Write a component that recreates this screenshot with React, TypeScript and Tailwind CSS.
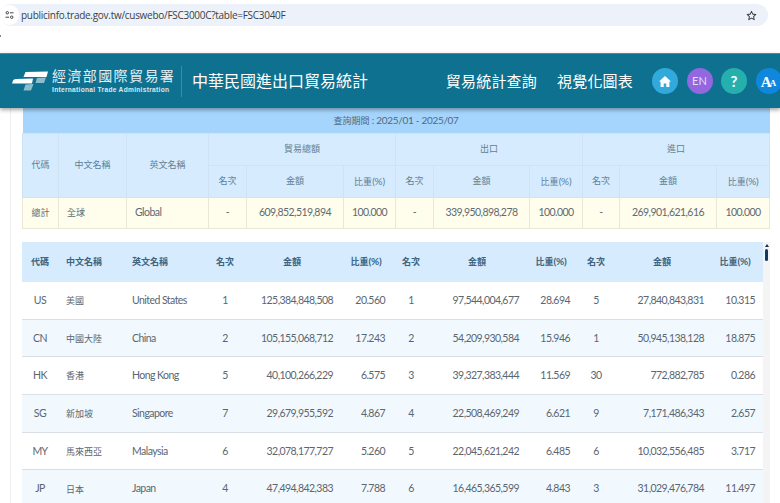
const cjk = "font-['Lato','Noto_Sans_CJK_TC',sans-serif]";

const rows = [
  ["US", "美國", "United States", "1", "125,384,848,508", "20.560", "1", "97,544,004,677", "28.694", "5", "27,840,843,831", "10.315"],
  ["CN", "中國大陸", "China", "2", "105,155,068,712", "17.243", "2", "54,209,930,584", "15.946", "1", "50,945,138,128", "18.875"],
  ["HK", "香港", "Hong Kong", "5", "40,100,266,229", "6.575", "3", "39,327,383,444", "11.569", "30", "772,882,785", "0.286"],
  ["SG", "新加坡", "Singapore", "7", "29,679,955,592", "4.867", "4", "22,508,469,249", "6.621", "9", "7,171,486,343", "2.657"],
  ["MY", "馬來西亞", "Malaysia", "6", "32,078,177,727", "5.260", "5", "22,045,621,242", "6.485", "6", "10,032,556,485", "3.717"],
  ["JP", "日本", "Japan", "4", "47,494,842,383", "7.788", "6", "16,465,365,599", "4.843", "3", "31,029,476,784", "11.497"],
];

const topCols = [36, 68, 82, 38, 97, 52, 38, 96, 53, 37, 97, 53];
const listCols = [36, 66, 79, 44, 90, 58, 32, 100, 48, 42, 90, 56];

const cellAlign = [
  "pt-px text-center",
  "pl-2 pt-px text-left text-[9px] tracking-normal",
  "pl-2 pt-px text-left",
  "pt-px text-center",
  "pr-1 pt-px text-right",
  "pr-[10px] pt-px text-right",
  "pt-px text-center",
  "pr-2 pt-px text-right",
  "pr-[5px] pt-px text-right",
  "pt-px text-center",
  "pr-[3px] pt-px text-right",
  "pr-2 pt-px text-right",
];

function Logo() {
  return (
    <svg width="36" height="20" viewBox="0 0 36 20" className="shrink-0">
      <path d="M13.5 1 L36 0.5 L34.5 6 L11.5 6 Z" fill="#ffffff" />
      <path d="M1 9.5 Q1.5 8 4 8 L21 7.5 L20 12.5 L0 12.5 Z" fill="#ffffff" />
      <path d="M25 7 L34 6.5 L32 12 L23.5 12 Z" fill="#8dbccc" />
      <path d="M13.5 13.5 L21.5 13 L19 19.5 L11.5 19.5 Z" fill="#8dbccc" />
    </svg>
  );
}

function Label({ text }: { text: string }) {
  if (text.endsWith("(%)")) {
    return (
      <>
        {text.slice(0, -3)}
        <span className="text-[10px] tracking-[-0.2px]">(%)</span>
      </>
    );
  }
  return <>{text}</>;
}

function HeadCell({ children, rowSpan, colSpan }: { children: string; rowSpan?: number; colSpan?: number }) {
  return (
    <th rowSpan={rowSpan} colSpan={colSpan} className="border border-[#cfe3f5] text-center text-[9px] font-normal text-[#5f7f96]">
      <Label text={children} />
    </th>
  );
}

function TopTable() {
  const bordered = "border border-[#ebe7d6] pt-px";
  return (
    <table className="w-[747px] table-fixed border-collapse">
      <colgroup>
        {topCols.map((w, i) => (
          <col key={i} style={{ width: w }} />
        ))}
      </colgroup>
      <thead>
        <tr className="h-[25px] bg-[#a5d5fd]">
          <th colSpan={12} className="text-center text-[9px] font-normal text-[#51697c]">
            查詢期間 <span className="text-[10px] tracking-[-0.3px]">: 2025/01 - 2025/07</span>
          </th>
        </tr>
        <tr className="h-[32px] bg-[#d6ebfd]">
          <HeadCell rowSpan={2}>代碼</HeadCell>
          <HeadCell rowSpan={2}>中文名稱</HeadCell>
          <HeadCell rowSpan={2}>英文名稱</HeadCell>
          <HeadCell colSpan={3}>貿易總額</HeadCell>
          <HeadCell colSpan={3}>出口</HeadCell>
          <HeadCell colSpan={3}>進口</HeadCell>
        </tr>
        <tr className="h-[32px] bg-[#d6ebfd]">
          {["名次", "金額", "比重(%)", "名次", "金額", "比重(%)", "名次", "金額", "比重(%)"].map((t, i) => (
            <HeadCell key={i}>{t}</HeadCell>
          ))}
        </tr>
      </thead>
      <tbody>
        <tr className="h-[31px] bg-[#fffdeb] text-[10.5px] tracking-[-0.55px] text-[#5e6b73]">
          <td className={`${bordered} text-center text-[9px] tracking-normal`}>總計</td>
          <td className={`${bordered} pl-2 text-[9px] tracking-normal`}>全球</td>
          <td className={`${bordered} pl-2`}>Global</td>
          {["-", "609,852,519,894", "100.000", "-", "339,950,898,278", "100.000", "-", "269,901,621,616", "100.000"].map((t, i) => (
            <td key={i} className={`${bordered} text-center`}>
              {t}
            </td>
          ))}
        </tr>
      </tbody>
    </table>
  );
}

function ListTable() {
  const heads = ["代碼", "中文名稱", "英文名稱", "名次", "金額", "比重(%)", "名次", "金額", "比重(%)", "名次", "金額", "比重(%)"];
  return (
    <table className="w-[741px] table-fixed border-collapse">
      <colgroup>
        {listCols.map((w, i) => (
          <col key={i} style={{ width: w }} />
        ))}
      </colgroup>
      <thead>
        <tr className="h-[40px] bg-[#d6ebfd]">
          {heads.map((h, i) => (
            <th key={i} className={`text-[9px] font-bold text-[#3d6480] ${i === 1 || i === 2 ? "pl-2 text-left" : "text-center"}`}>
              <Label text={h} />
            </th>
          ))}
        </tr>
      </thead>
      <tbody>
        {rows.map((row, r) => (
          <tr key={row[0]} className={`h-[37.7px] border-b border-[#d9dfe4] text-[10.5px] tracking-[-0.55px] text-[#5a6670] ${r % 2 === 1 ? "bg-[#f2f9fe]" : "bg-white"}`}>
            {row.map((cell, i) => (
              <td key={i} className={cellAlign[i]}>
                {cell}
              </td>
            ))}
          </tr>
        ))}
      </tbody>
    </table>
  );
}

export default function App() {
  return (
    <div className={`h-[503px] w-[780px] overflow-hidden bg-white ${cjk}`}>
      <div className="h-[53px] pt-[4px]">
        <div className="flex h-[22px] w-[768px] items-center rounded-full bg-[#edf2fa] pr-[11px]">
          <div className="flex h-[20px] w-[19px] items-center justify-center rounded-full bg-white">
            <svg width="9" height="8" viewBox="0 0 10 9" fill="none" stroke="#3c4043" strokeWidth="1.1">
              <circle cx="2.5" cy="2" r="1.4" />
              <path d="M5.5 2 H9.5" />
              <circle cx="7.5" cy="7" r="1.4" />
              <path d="M0.5 7 H4.5" />
            </svg>
          </div>
          <span className="ml-[2px] font-['Open_Sans',sans-serif] text-[10px] tracking-[-0.28px] text-[#3c4043]">publicinfo.trade.gov.tw/cuswebo/FSC3000C?table=FSC3040F</span>
          <svg width="11" height="11" viewBox="0 0 24 24" fill="none" stroke="#3c4043" strokeWidth="2.2" strokeLinejoin="round" className="ml-auto">
            <path d="M12 3 L14.8 9 L21.5 9.8 L16.5 14.3 L17.9 21 L12 17.6 L6.1 21 L7.5 14.3 L2.5 9.8 L9.2 9 Z" />
          </svg>
        </div>
        <div className="mt-[9px] h-[2px] w-px bg-[#8a8a8a]" />
      </div>

      <header className="relative z-10 flex h-[55px] items-center border-t border-[#3f8fa8] bg-[#0f7190] pl-[12px] shadow-[0_2px_4px_rgba(0,0,0,0.35)]">
        <Logo />
        <div className="ml-[4px] w-[124px]">
          <div className="whitespace-nowrap text-[14px] leading-[16px] tracking-[1.4px] text-[#e3eef3]">經濟部國際貿易署</div>
          <div className="mt-[1px] whitespace-nowrap font-['Liberation_Sans',sans-serif] text-[6.6px] font-bold leading-[9px] tracking-[0.3px] text-[#dbe9ef]">International Trade Administration</div>
        </div>
        <div className="ml-[5px] h-[31px] w-px bg-[#3f8ba5]" />
        <div className="ml-[10px] whitespace-nowrap text-[16px] text-white">中華民國進出口貿易統計</div>
        <nav className="ml-auto flex items-center whitespace-nowrap pt-[1px] text-[15px] tracking-[0.2px] text-white">
          <span>貿易統計查詢</span>
          <span className="ml-[20px]">視覺化圖表</span>
        </nav>
        <div className="ml-[19px] flex w-[128px] items-center gap-[8.5px] overflow-hidden">
          <span className="flex h-[26px] w-[26px] shrink-0 items-center justify-center rounded-full bg-[#31aadb]">
            <svg width="12" height="11" viewBox="0 0 12 11" fill="#ffffff">
              <path d="M6 0 L12 5.6 L10.4 5.6 L10.4 11 L7.3 11 L7.3 7.4 L4.7 7.4 L4.7 11 L1.6 11 L1.6 5.6 L0 5.6 Z" />
            </svg>
          </span>
          <span className="flex h-[26px] w-[26px] shrink-0 items-center justify-center rounded-full bg-[#9267e0] text-[11px] text-[#e8dcfb]">EN</span>
          <span className="flex h-[26px] w-[26px] shrink-0 items-center justify-center rounded-full bg-[#26b0ad] text-[15px] font-bold text-white">?</span>
          <span className="flex h-[26px] w-[26px] shrink-0 items-end justify-center rounded-full bg-[#0f87dc] pb-[4px] font-['Liberation_Serif',serif] text-[15px] leading-[16px] font-bold text-white">
            <span className="tracking-[-2px]">A</span>
            <span className="text-[9px] leading-[14px]">A</span>
          </span>
        </div>
      </header>

      <main className="ml-[10px] h-[395px] border-l border-[#eeeeee] pl-[11px]">
        <TopTable />
        <div className="mt-[13px] flex w-[748px]">
          <ListTable />
          <div className="flex w-[7px] flex-col items-center bg-[#f4f4f4] pt-[2px]">
            <div className="h-0 w-0 border-x-[2px] border-b-[3px] border-x-transparent border-b-[#0f2f55]" />
            <div className="mt-[2px] h-[12px] w-[3px] rounded-full bg-[#123a68]" />
          </div>
        </div>
      </main>
    </div>
  );
}
